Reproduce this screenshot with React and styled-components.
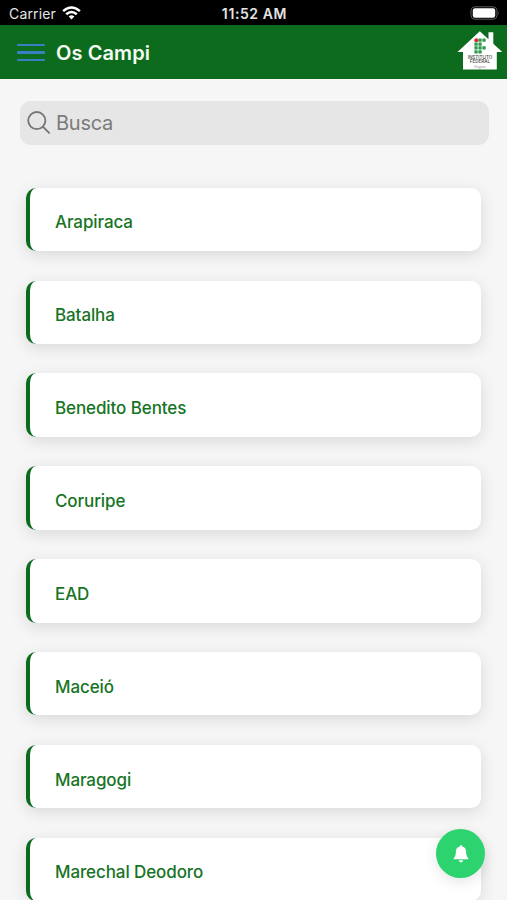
import styled, { createGlobalStyle } from 'styled-components'

const GlobalStyle = createGlobalStyle`
  * {
    box-sizing: border-box;
  }
  body {
    margin: 0;
    background: #f6f6f6;
    font-family: Inter, 'Liberation Sans', sans-serif;
  }
`

const Screen = styled.div`
  position: relative;
  display: flex;
  flex-direction: column;
  height: 900px;
  overflow: hidden;
`

const StatusBar = styled.div`
  flex: none;
  display: grid;
  grid-template-columns: 1fr auto 1fr;
  align-items: center;
  height: 25px;
  padding: 2px 7px 0 9px;
  background: #000;
  color: #e4e4e4;
  font-size: 14px;
`

const Carrier = styled.div`
  display: flex;
  align-items: center;
  gap: 6px;
  letter-spacing: 0.15px;

  svg {
    margin-bottom: 2px;
  }
`

const Clock = styled.div`
  font-size: 14px;
  font-weight: 600;
  letter-spacing: 0.6px;
`

const Battery = styled.svg`
  justify-self: end;
  margin-bottom: 2px;
`

const Header = styled.header`
  flex: none;
  display: flex;
  align-items: center;
  height: 54px;
  padding: 0 4px 0 17px;
  background: #0c6b1c;
`

const MenuButton = styled.button`
  display: flex;
  flex-direction: column;
  gap: 5px;
  width: 28px;
  padding: 1px 0 0;
  border: 0;
  background: none;

  span {
    height: 2.5px;
    border-radius: 1px;
    background: #3880c4;
  }
`

const Title = styled.h1`
  flex: 1;
  margin: 0 0 0 11px;
  padding-top: 1px;
  color: #f4fbf4;
  font-size: 20px;
  font-weight: 600;
  letter-spacing: 0.1px;
`

const SearchBar = styled.div`
  flex: none;
  display: flex;
  align-items: center;
  gap: 5.5px;
  height: 44px;
  margin: 22px 18.5px 0 19.5px;
  padding: 0 0 0 7px;
  border-radius: 11px;
  background: #e6e6e6;
  color: #7b7b7b;
  font-size: 20px;
  letter-spacing: -0.25px;
`

const CampusList = styled.ul`
  display: flex;
  flex-direction: column;
  gap: 29.36px;
  margin: 42.7px 26px 0;
  padding: 0;
  list-style: none;
`

const CampusCard = styled.li`
  flex: none;
  display: flex;
  align-items: center;
  height: 63.5px;
  padding: 6px 0 0 25px;
  border-left: 4px solid #0b6b1c;
  border-radius: 10px;
  background: #fff;
  box-shadow: 0 4px 16px rgba(0, 0, 0, 0.12);
  color: #177425;
  font-size: 17px;
  font-weight: 500;
  letter-spacing: -0.1px;
`

const AlertButton = styled.button`
  position: absolute;
  right: 22px;
  bottom: 22px;
  display: flex;
  align-items: center;
  justify-content: center;
  width: 49px;
  height: 49px;
  padding: 0;
  border: 0;
  border-radius: 50%;
  background: #2dd36f;
  box-shadow: 0 4px 14px rgba(0, 0, 0, 0.1);
`

const Logo = styled.svg`
  margin-bottom: 3px;
`

const campi = [
  'Arapiraca',
  'Batalha',
  'Benedito Bentes',
  'Coruripe',
  'EAD',
  'Maceió',
  'Maragogi',
  'Marechal Deodoro',
]

const WifiIcon = () => (
  <svg width="19" height="14" viewBox="0 0 19 14">
    <g fill="none" stroke="#fff" strokeWidth="2.5">
      <path d="M1.1 5.1Q9.5 -2.1 17.9 5.1" />
      <path d="M4.2 8.2Q9.5 3.8 14.8 8.2" />
    </g>
    <path d="M6.7 10.4Q9.5 8.3 12.3 10.4L9.5 13.4Z" fill="#fff" />
  </svg>
)

const BatteryIcon = () => (
  <Battery width="30" height="14" viewBox="0 0 30 14">
    <rect x="1" y="0.8" width="26" height="12.4" rx="3.8" fill="none" stroke="#5c5c5c" />
    <rect x="2.8" y="2.3" width="22.4" height="9.4" rx="2.2" fill="#fff" />
    <path d="M28.3 5q1.5 2 0 4z" fill="#5c5c5c" />
  </Battery>
)

const SearchIcon = () => (
  <svg width="24" height="24" viewBox="0 0 24 24" fill="none" stroke="#757575" strokeWidth="1.8" strokeLinecap="round">
    <circle cx="9.8" cy="9.6" r="8.6" />
    <path d="M16.1 15.9L22.1 21.9" />
  </svg>
)

const BellIcon = () => (
  <svg width="16" height="18" viewBox="0 0 16 18" fill="#fff">
    <path d="M8 .3c.8 0 1.2.5 1.3 1.3 2.6.6 3.7 2.7 3.8 5 .1 3.4.5 4.8 2 6.3.5.6.2 1.4-.6 1.4h-13c-.8 0-1.1-.8-.6-1.4 1.5-1.5 1.9-2.9 2-6.3.1-2.3 1.2-4.4 3.8-5C6.8.8 7.2.3 8 .3z" />
    <path d="M5.9 15.2h4.2c-.2 1.3-1 2.1-2.1 2.1s-1.9-.8-2.1-2.1z" />
  </svg>
)

// squares of the "IF" mark as [column, row], the red dot takes 0,0
const logoSquares = [
  [1, 0], [2, 0],
  [0, 1], [1, 1],
  [0, 2], [1, 2], [2, 2],
  [0, 3], [1, 3],
]

const CampusLogo = () => (
  <Logo width="46" height="40" viewBox="0 0 46 40">
    <path d="M22.8 .3L31.5 8.3V1.3H36.3V12.7L45.3 21.1H39.8V38.5H6V21.1H.5Z" fill="#fff" />
    <circle cx="19.3" cy="9.2" r="2" fill="#e02533" />
    {logoSquares.map(([col, row]) => (
      <rect key={`${col}-${row}`} x={17.4 + col * 4} y={7.5 + row * 3.9} width="3.3" height="3.3" rx="0.5" fill="#2f9a4c" />
    ))}
    <g fill="#444" fontWeight="500" fontSize="4.6" textAnchor="middle">
      <text x="23" y="28.3">INSTITUTO</text>
      <text x="23" y="32.3">FEDERAL</text>
    </g>
    <text x="23" y="36.8" fill="#999" fontSize="3.2" textAnchor="middle">Alagoas</text>
  </Logo>
)

export default function App() {
  return (
    <Screen>
      <GlobalStyle />
      <StatusBar>
        <Carrier>
          Carrier
          <WifiIcon />
        </Carrier>
        <Clock>11:52 AM</Clock>
        <BatteryIcon />
      </StatusBar>
      <Header>
        <MenuButton aria-label="Menu">
          <span />
          <span />
          <span />
        </MenuButton>
        <Title>Os Campi</Title>
        <CampusLogo />
      </Header>
      <SearchBar>
        <SearchIcon />
        Busca
      </SearchBar>
      <CampusList>
        {campi.map((name) => (
          <CampusCard key={name}>{name}</CampusCard>
        ))}
      </CampusList>
      <AlertButton aria-label="Avisos">
        <BellIcon />
      </AlertButton>
    </Screen>
  )
}
